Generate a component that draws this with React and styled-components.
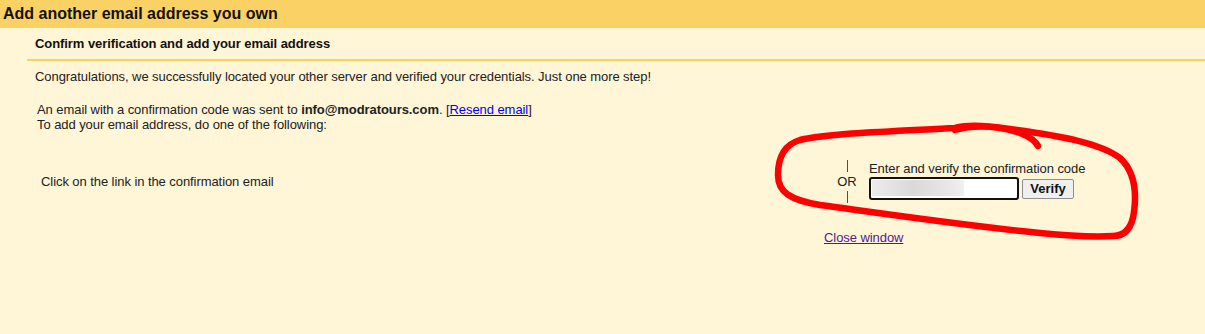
import styled, { createGlobalStyle } from "styled-components";

const GlobalStyle = createGlobalStyle`
  html, body {
    margin: 0;
    padding: 0;
    background: #fff5d7;
  }
  body {
    font-family: "Liberation Sans", Arial, sans-serif;
    font-size: 13px;
    color: #222;
  }
`;

const Page = styled.div`
  position: relative;
  width: 1205px;
  min-height: 334px;
  background: #fff5d7;
  overflow: hidden;
`;

const TitleBar = styled.div`
  height: 28px;
  padding-left: 3px;
  display: flex;
  align-items: center;
  background: #fad165;
  font-size: 16px;
  font-weight: bold;
  color: #111;
`;

const Section = styled.div`
  margin-left: 27px;
  letter-spacing: -0.07px;
`;

const SubTitle = styled.div`
  height: 31px;
  padding-left: 8px;
  display: flex;
  align-items: center;
  font-weight: bold;
  color: #111;
  border-bottom: 2px solid #fad165;
`;

const Body = styled.div`
  padding: 8px 0 0 8px;
  line-height: 15px;
`;

const Para = styled.p`
  margin: 0 0 ${(p) => p.$gap || 0}px ${(p) => p.$indent || 0}px;
`;

const Link = styled.a`
  color: ${(p) => (p.$visited ? "#551a8b" : "#0000ee")};
  text-decoration: underline;
  cursor: pointer;
`;

const Options = styled.div`
  display: flex;
  align-items: center;
  margin-top: 28px;
`;

const Option = styled.div`
  flex: 0 0 802px;
  padding-left: 6px;
  box-sizing: border-box;
`;

const OrColumn = styled.div`
  width: 20px;
  display: flex;
  flex-direction: column;
  align-items: center;
  gap: 2px;
  margin-right: 12px;
  letter-spacing: 0;
`;

const OrLine = styled.span`
  display: block;
  flex-shrink: 0;
  width: 1px;
  height: 12px;
  background: #6b5000;
`;

const CodeBox = styled.div`
  display: flex;
  flex-direction: column;
  gap: 1px;
  margin-top: -2px;
`;

const CodeRow = styled.div`
  display: flex;
  align-items: center;
  gap: 3px;
`;

const CodeInput = styled.div`
  width: 145px;
  height: 18px;
  border: 2px solid #111;
  border-radius: 3px;
  background: #fff;
  padding: 1px 0 0 1px;
  box-sizing: content-box;
`;

const Blur = styled.div`
  width: 92px;
  height: 16px;
  background: linear-gradient(90deg, #ececec 0%, #d9d9d9 45%, #e6e6e6 80%, #f0f0f0 100%);
`;

const VerifyButton = styled.button`
  height: 20px;
  width: 52px;
  padding: 0;
  font-family: "Liberation Sans", Arial, sans-serif;
  font-size: 13px;
  font-weight: bold;
  color: #111;
  background: #efefef;
  border: 1px solid #8f8f8f;
  border-radius: 2px;
`;

const Footer = styled.div`
  margin: 27px 0 0 789px;
`;

const Scribble = styled.svg`
  position: absolute;
  top: 0;
  left: 0;
  pointer-events: none;
`;

export default function App() {
  return (
    <Page>
      <GlobalStyle />
      <TitleBar>Add another email address you own</TitleBar>
      <Section>
        <SubTitle>Confirm verification and add your email address</SubTitle>
        <Body>
          <Para $gap={18}>
            Congratulations, we successfully located your other server and verified your
            credentials. Just one more step!
          </Para>
          <Para $indent={2}>
            An email with a confirmation code was sent to <b>info@modratours.com</b>. [
            <Link>Resend email</Link>]
          </Para>
          <Para $indent={2}>To add your email address, do one of the following:</Para>
          <Options>
            <Option>Click on the link in the confirmation email</Option>
            <OrColumn>
              <OrLine />
              <span>OR</span>
              <OrLine />
            </OrColumn>
            <CodeBox>
              <span>Enter and verify the confirmation code</span>
              <CodeRow>
                <CodeInput>
                  <Blur />
                </CodeInput>
                <VerifyButton>Verify</VerifyButton>
              </CodeRow>
            </CodeBox>
          </Options>
          <Footer>
            <Link $visited>Close window</Link>
          </Footer>
        </Body>
      </Section>
      <Scribble width="1205" height="334" viewBox="0 0 1205 334">
        <path
          d="M 1113 236 C 1125 236, 1132 228, 1134 212 C 1137 190, 1133 170, 1120 158 C 1100 143, 1060 136, 1017 130 C 990 126, 970 124, 955 128 C 900 131, 830 133, 800 140 C 783 145, 778 160, 778 175 C 778 192, 790 200, 820 205 C 880 213, 960 225, 1040 233 C 1070 236, 1095 237, 1113 236"
          fill="none"
          stroke="#ff0000"
          strokeWidth="6.5"
          strokeLinecap="round"
          strokeLinejoin="round"
        />
        <path
          d="M 955 130 C 975 124, 1000 126, 1020 133 C 1030 137, 1036 142, 1038 146"
          fill="none"
          stroke="#ff0000"
          strokeWidth="6.5"
          strokeLinecap="round"
        />
      </Scribble>
    </Page>
  );
}
